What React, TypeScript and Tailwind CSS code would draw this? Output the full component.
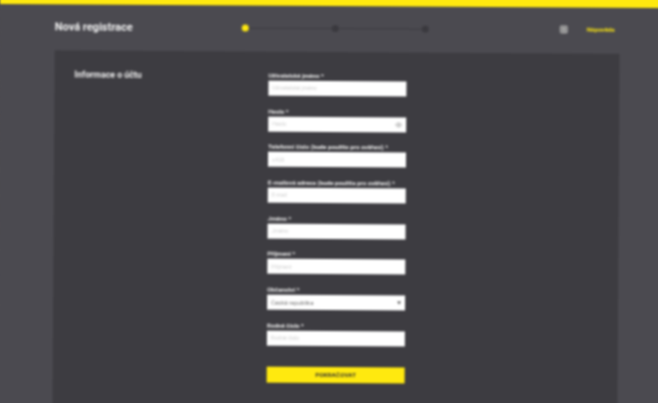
import { Eye, MessageSquare } from "lucide-react";

const fields = [
  { label: "Uživatelské jméno *", ph: "Uživatelské jméno" },
  { label: "Heslo *", ph: "Heslo", eye: true },
  { label: "Telefonní číslo (bude použito pro ověření) *", ph: "+420" },
  { label: "E-mailová adresa (bude použita pro ověření) *", ph: "E-mail" },
  { label: "Jméno *", ph: "Jméno" },
  { label: "Příjmení *", ph: "Příjmení" },
  { label: "Občanství *", ph: "Česká republika", select: true },
  { label: "Rodné číslo *", ph: "Rodné číslo" },
];

export default function App() {
  return (
    <div className="w-[658px] h-[403px] overflow-hidden bg-[#4b4a50] font-['Roboto',sans-serif]">
      <div className="w-[680px] h-[430px] -mt-[10px] bg-[#4b4a50] origin-top-left rotate-[0.35deg] blur-[0.85px]">
        <div className="h-[14px] bg-[#ffe90f]" />
        <div className="h-[46px] pl-[55px] flex items-center pb-[2px]">
          <div className="w-[187px] text-[11px] font-bold text-[#f2f2f2] leading-none">Nová registrace</div>
          <div className="w-[7px] h-[7px] rounded-full bg-[#ffe90f]" />
          <div className="w-[83px] h-px bg-[#3d3c41]" />
          <div className="w-[7px] h-[7px] rounded-full bg-[#3a393e]" />
          <div className="w-[83px] h-px bg-[#3d3c41]" />
          <div className="w-[7px] h-[7px] rounded-full bg-[#3a393e]" />
          <div className="ml-[131px] w-[8px] h-[8px] rounded-[2px] bg-[#aaaaaa] flex items-center justify-center">
            <MessageSquare size={6} className="text-[#444444]" />
          </div>
          <div className="ml-[19px] text-[6.2px] font-bold text-[#ffe90f] leading-none">Nápověda</div>
        </div>
        <div className="ml-[55px] w-[565px] h-[370px] bg-[#3d3c41] flex pl-[20px] pt-[19px]">
          <div className="w-[194px] text-[8.8px] font-bold text-[#f2f2f2] leading-[11px]">Informace o účtu</div>
          <div className="w-[138px] flex flex-col gap-[12.7px] pt-[2px]">
            {fields.map((f) => (
              <div key={f.label} className="flex flex-col">
                <div className="text-[6.2px] font-bold text-[#f0f0f0] leading-[7px] mb-[1px] whitespace-nowrap">{f.label}</div>
                <div className="h-[15px] bg-white flex items-center justify-between px-[4px]">
                  <span className={f.select ? "text-[6px] text-[#777777]" : "text-[5.5px] text-[#cfcfcf]"}>{f.ph}</span>
                  {f.eye && <Eye size={7} className="text-[#888888]" />}
                  {f.select && <div className="w-0 h-0 border-x-[2px] border-x-transparent border-t-[3px] border-t-[#555555]" />}
                </div>
              </div>
            ))}
            <button className="mt-[8px] h-[16px] bg-[#ffe90f] text-[6px] font-bold text-[#333333] tracking-[0.2px]">POKRAČOVAT</button>
          </div>
        </div>
      </div>
    </div>
  );
}
